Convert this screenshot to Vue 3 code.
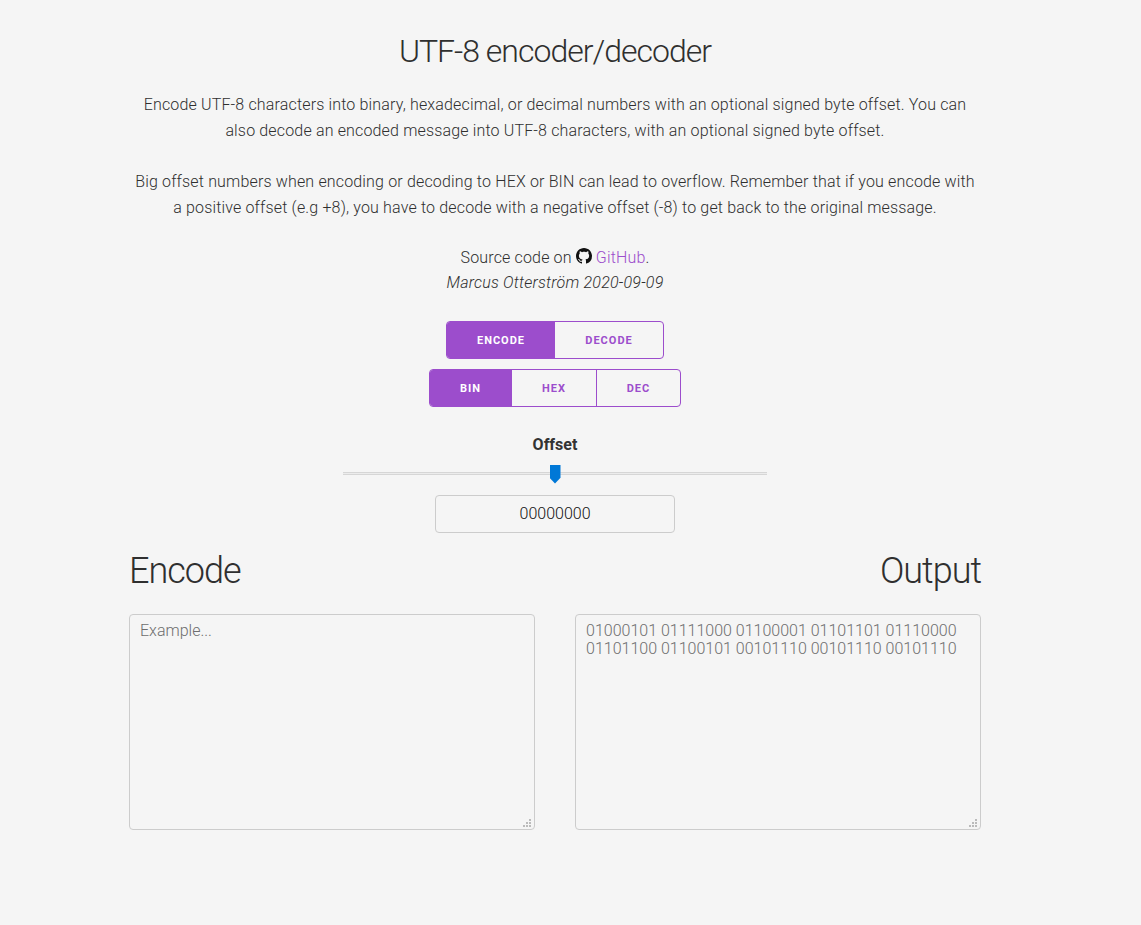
<script setup>
import { ref } from 'vue';

const mode = ref('ENCODE');
const format = ref('BIN');
const offset = ref(0);
const input = ref('');
const output = ref('01000101 01111000 01100001 01101101 01110000 01101100 01100101 00101110 00101110 00101110');

const modes = ['ENCODE', 'DECODE'];
const formats = ['BIN', 'HEX', 'DEC'];
</script>

<template>
  <div class="page">
    <h1 class="title">UTF-8 encoder/decoder</h1>
    <p class="intro">
      Encode UTF-8 characters into binary, hexadecimal, or decimal numbers with an optional signed byte offset. You can
      also decode an encoded message into UTF-8 characters, with an optional signed byte offset.
    </p>
    <p class="intro">
      Big offset numbers when encoding or decoding to HEX or BIN can lead to overflow. Remember that if you encode with
      a positive offset (e.g +8), you have to decode with a negative offset (-8) to get back to the original message.
    </p>
    <p class="source">
      Source code on
      <svg class="github" viewBox="0 0 16 16" aria-hidden="true">
        <path
          d="M8 0C3.58 0 0 3.58 0 8c0 3.54 2.29 6.53 5.47 7.59.4.07.55-.17.55-.38 0-.19-.01-.82-.01-1.49-2.01.37-2.53-.49-2.69-.94-.09-.23-.48-.94-.82-1.13-.28-.15-.68-.52-.01-.53.63-.01 1.08.58 1.23.82.72 1.21 1.87.87 2.33.66.07-.52.28-.87.51-1.07-1.78-.2-3.64-.89-3.64-3.95 0-.87.31-1.59.82-2.15-.08-.2-.36-1.02.08-2.12 0 0 .67-.21 2.2.82.64-.18 1.32-.27 2-.27.68 0 1.36.09 2 .27 1.53-1.04 2.2-.82 2.2-.82.44 1.1.16 1.92.08 2.12.51.56.82 1.27.82 2.15 0 3.07-1.87 3.75-3.65 3.95.29.25.54.73.54 1.48 0 1.07-.01 1.93-.01 2.2 0 .21.15.46.55.38A8.013 8.013 0 0 0 16 8c0-4.42-3.58-8-8-8z"
        />
      </svg>
      {{ ' ' }}<a class="link" href="#">GitHub</a>.
      <br />
      <em class="author">Marcus Otterström 2020-09-09</em>
    </p>

    <div class="controls">
      <div class="group">
        <button
          v-for="m in modes"
          :key="m"
          class="btn btn-mode"
          :class="{ active: mode === m }"
          @click="mode = m"
        >{{ m }}</button>
      </div>
      <div class="group">
        <button
          v-for="f in formats"
          :key="f"
          class="btn btn-format"
          :class="{ active: format === f }"
          @click="format = f"
        >{{ f }}</button>
      </div>

      <label class="offset-label" for="offset">Offset</label>
      <input id="offset" v-model="offset" class="slider" type="range" min="-128" max="128" />
      <input class="offset-value" type="text" value="00000000" />
    </div>

    <div class="columns">
      <div class="column">
        <h2 class="heading">Encode</h2>
        <div class="box-wrap">
          <textarea v-model="input" class="box" placeholder="Example..."></textarea>
          <svg class="grip" viewBox="0 0 8 8" aria-hidden="true">
            <path d="M6 0h2v2H6zM3 3h2v2H3zM6 3h2v2H6zM0 6h2v2H0zM3 6h2v2H3zM6 6h2v2H6z" />
          </svg>
        </div>
      </div>
      <div class="column">
        <h2 class="heading right">Output</h2>
        <div class="box-wrap">
          <textarea v-model="output" class="box" readonly></textarea>
          <svg class="grip" viewBox="0 0 8 8" aria-hidden="true">
            <path d="M6 0h2v2H6zM3 3h2v2H3zM6 3h2v2H6zM0 6h2v2H0zM3 6h2v2H3zM6 6h2v2H6z" />
          </svg>
        </div>
      </div>
    </div>
  </div>
</template>

<style>
html,
body {
  background: #f5f5f5;
}
</style>

<style scoped>
.page {
  box-sizing: border-box;
  width: 1110px;
  height: 925px;
  padding: 31px 129px 0;
  font-family: Roboto, sans-serif;
  font-weight: 300;
  font-size: 16px;
  color: #2f2f2f;
  text-align: center;
}

.title {
  margin: 0 0 21px;
  font-size: 32px;
  line-height: 40px;
  font-weight: 300;
  letter-spacing: -1px;
}

.intro {
  margin: 0 0 25px;
  line-height: 26px;
  letter-spacing: 0.16px;
}

.source {
  margin: -1px 0 26px;
  line-height: 25px;
  letter-spacing: 0.16px;
}

.author {
  letter-spacing: 0.22px;
}

.github {
  width: 16px;
  height: 16px;
  fill: #111;
  vertical-align: -1px;
}

.link {
  color: #9c4dcc;
  text-decoration: none;
}

.controls {
  display: flex;
  flex-direction: column;
  align-items: center;
}

.group {
  display: flex;
  margin-bottom: 10px;
  border: 1px solid #9c4dcc;
  border-radius: 4px;
  overflow: hidden;
}

.btn {
  box-sizing: border-box;
  height: 36px;
  padding: 0;
  border: 0;
  background: transparent;
  color: #9c4dcc;
  font-family: Roboto, sans-serif;
  font-size: 11px;
  font-weight: 700;
  letter-spacing: 1px;
  cursor: pointer;
}

.btn-mode {
  width: 108px;
}

.btn-format {
  width: 84px;
}

.btn-format:first-child {
  width: 81px;
}

.btn-format:nth-child(2) {
  width: 85px;
}

.btn-format + .btn-format {
  border-left: 1px solid #9c4dcc;
}

.btn.active {
  background: #9c4dcc;
  color: #fff;
}

.offset-label {
  margin-top: 18px;
  font-size: 16px;
  line-height: 20px;
  font-weight: 700;
  color: #333;
}

.slider {
  -webkit-appearance: none;
  appearance: none;
  width: 424px;
  height: 20px;
  margin: 8px 0 12px;
  background: transparent;
}

.slider::-webkit-slider-runnable-track {
  box-sizing: border-box;
  height: 3px;
  border-top: 1px solid #d6d6d6;
  border-bottom: 1px solid #d6d6d6;
  background: #ececec;
}

.slider::-webkit-slider-thumb {
  -webkit-appearance: none;
  appearance: none;
  width: 11px;
  height: 19px;
  margin-top: -8px;
  background: #0078d7;
  clip-path: polygon(0 0, 100% 0, 100% 70%, 50% 100%, 0 70%);
}

.offset-value {
  box-sizing: border-box;
  width: 240px;
  height: 38px;
  padding: 0 0 2px;
  border: 1px solid #ccc;
  border-radius: 4px;
  background: #f5f5f5;
  color: #111;
  font-family: Roboto, sans-serif;
  font-size: 16px;
  font-weight: 300;
  text-align: center;
  outline: none;
}

.columns {
  display: grid;
  grid-template-columns: 406px 406px;
  justify-content: space-between;
  margin-top: 15px;
}

.column {
  display: flex;
  flex-direction: column;
}

.heading {
  margin: 0 0 20px;
  font-size: 36px;
  line-height: 46px;
  font-weight: 300;
  letter-spacing: -1px;
  text-align: left;
}

.heading.right {
  text-align: right;
}

.box-wrap {
  position: relative;
  height: 216px;
}

.box {
  display: block;
  box-sizing: border-box;
  width: 406px;
  height: 216px;
  padding: 7px 10px;
  border: 1px solid #ccc;
  border-radius: 4px;
  background: #f5f5f5;
  color: #6e6e6e;
  font-family: Roboto, sans-serif;
  font-size: 16px;
  font-weight: 300;
  line-height: 18px;
  outline: none;
  resize: none;
}

.box::placeholder {
  color: #6e6e6e;
}

.grip {
  position: absolute;
  right: 4px;
  bottom: 3px;
  width: 8px;
  height: 8px;
  fill: #bbb;
}
</style>
